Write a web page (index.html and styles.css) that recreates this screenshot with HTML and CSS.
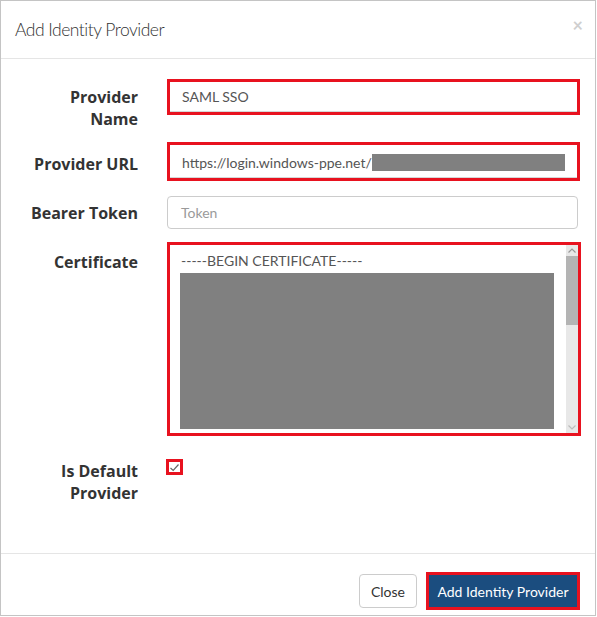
FILE: index.html
```html
<!DOCTYPE html>
<html>
<head>
<meta charset="utf-8">
<link rel="stylesheet" href="styles.css">
</head>
<body>
<div class="modal">
  <div class="modal-header">
    <h4 class="title">Add Identity Provider</h4>
    <span class="close">×</span>
  </div>
  <div class="modal-body">
    <div class="row row-name">
      <div class="lbl">Provider<br>Name</div>
      <div class="hl hl-name"><div class="field">SAML SSO</div></div>
    </div>
    <div class="row row-url">
      <div class="lbl">Provider URL</div>
      <div class="hl hl-url"><div class="field field-url">https://login.windows-ppe.net/<span class="redact redact-url"></span></div></div>
    </div>
    <div class="row row-token">
      <div class="lbl">Bearer Token</div>
      <div class="input placeholder">Token</div>
    </div>
    <div class="row row-cert">
      <div class="lbl">Certificate</div>
      <div class="hl hl-cert">
        <div class="cert">
          <div class="cert-text">
            <div class="cert-line">-----BEGIN CERTIFICATE-----</div>
            <div class="redact redact-cert"></div>
          </div>
          <div class="scrollbar">
            <div class="sb-btn"><svg width="8" height="5" viewBox="0 0 8 5"><path d="M0.5 4.5 L4 1 L7.5 4.5" fill="none" stroke="#999" stroke-width="1.2"/></svg></div>
            <div class="sb-thumb"></div>
            <div class="sb-track"></div>
            <div class="sb-btn"><svg width="8" height="5" viewBox="0 0 8 5"><path d="M0.5 0.5 L4 4 L7.5 0.5" fill="none" stroke="#bbb" stroke-width="1.2"/></svg></div>
          </div>
        </div>
      </div>
    </div>
    <div class="row row-default">
      <div class="lbl">Is Default<br>Provider</div>
      <div class="check"><svg width="11" height="11" viewBox="0 0 11 11"><path d="M1.5 6 L4.2 8.5 L9.5 2.5" fill="none" stroke="#666" stroke-width="1.2"/></svg></div>
    </div>
  </div>
  <div class="modal-footer">
    <button class="btn btn-close">Close</button>
    <div class="hl hl-btn"><button class="btn btn-primary">Add Identity Provider</button></div>
  </div>
</div>
</body>
</html>
```
FILE: styles.css
```css
body {
  margin: 0;
  background: #fff;
  font-family: Lato, "Open Sans", sans-serif;
  color: #333;
}
.modal {
  width: 596px;
  height: 616px;
  box-sizing: border-box;
  border: 1px solid #c4c4c4;
  display: flex;
  flex-direction: column;
}
.modal-header {
  height: 57px;
  flex: none;
  border-bottom: 1px solid #e5e5e5;
  display: flex;
  align-items: center;
  justify-content: space-between;
  padding: 0 14px;
}
.title {
  margin: 0;
  font-size: 17.5px;
  font-weight: 300;
  letter-spacing: -0.5px;
  color: #333;
}
.close {
  font-size: 18px;
  font-weight: 700;
  color: #cfcfcf;
  line-height: 1;
  margin-right: -2px;
  margin-top: -10px;
}
.modal-body {
  flex: 1;
  padding-top: 20px;
}
.row {
  display: flex;
  align-items: flex-start;
}
.lbl {
  width: 137px;
  flex: none;
  margin-right: 29px;
  text-align: right;
  font-family: "Open Sans", Lato, sans-serif;
  font-weight: 700;
  font-size: 16px;
  line-height: 22px;
  color: #333;
}
.row-name .lbl { padding-top: 7px; }
.row-url { margin-top: 12px; }
.row-url .lbl { padding-top: 11px; }
.row-token { margin-top: 15px; }
.row-token .lbl { padding-top: 6px; }
.row-cert { margin-top: 13px; }
.row-cert .lbl { padding-top: 9px; }
.row-default { margin-top: 23px; }
.row-default .lbl { padding-top: 1px; }

.hl {
  border: 3px solid #e8121f;
  box-sizing: border-box;
}
.hl-name { width: 413px; height: 36px; }
.hl-url { width: 413px; height: 39px; }
.hl-cert { width: 414px; height: 194px; }

.field {
  height: 100%;
  box-sizing: border-box;
  padding-left: 12px;
  display: flex;
  align-items: center;
  font-size: 14px;
  color: #555;
  border-bottom: 1px solid #d6d6d6;
}
.field-url { padding-top: 2px; }
.redact {
  background: #808080;
  display: block;
}
.redact-url {
  width: 193px;
  height: 17px;
  margin-left: 0;
}
.input {
  width: 411px;
  height: 33px;
  box-sizing: border-box;
  border: 1px solid #cccccc;
  border-radius: 4px;
  padding-left: 13px;
  display: flex;
  align-items: center;
  font-size: 14px;
}
.placeholder { color: #9a9a9a; }

.cert {
  display: flex;
  height: 100%;
}
.cert-text {
  flex: 1;
  padding: 7px 0 0 10px;
}
.cert-line {
  font-size: 14px;
  color: #555;
  line-height: 18px;
  padding-left: 1px;
}
.redact-cert {
  width: 374px;
  height: 156px;
  margin-top: 3px;
}
.scrollbar {
  width: 12px;
  flex: none;
  display: flex;
  flex-direction: column;
  background: #e8e8e8;
}
.sb-btn {
  height: 11px;
  flex: none;
  display: flex;
  align-items: center;
  justify-content: center;
  background: #e8e8e8;
}
.sb-thumb {
  height: 69px;
  flex: none;
  background: #b4b4b4;
}
.sb-track { flex: 1; }

.check {
  width: 17px;
  height: 16px;
  box-sizing: border-box;
  border: 3px solid #e8121f;
  margin-left: -1px;
  display: flex;
  align-items: center;
  justify-content: center;
  background: #fff;
}

.modal-footer {
  height: 62px;
  flex: none;
  box-sizing: border-box;
  border-top: 1px solid #e5e5e5;
  display: flex;
  align-items: center;
  justify-content: flex-end;
  padding-right: 15px;
  padding-top: 13px;
}
.btn {
  font-family: Lato, "Open Sans", sans-serif;
  font-size: 14px;
  cursor: pointer;
}
.btn-close {
  width: 58px;
  height: 34px;
  border: 1px solid #cccccc;
  border-radius: 4px;
  background: #fff;
  color: #333;
  padding: 0;
  margin-right: 9px;
}
.hl-btn {
  width: 154px;
  height: 38px;
}
.btn-primary {
  width: 100%;
  height: 100%;
  border: none;
  background: #1b4d7f;
  color: #fff;
  padding: 0;
}
```
